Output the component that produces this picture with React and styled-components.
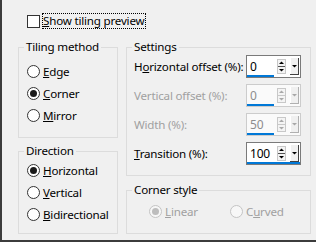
import React from "react";
import styled, { createGlobalStyle } from "styled-components";

const GlobalStyle = createGlobalStyle`
  html, body {
    margin: 0;
    padding: 0;
    background: #f0f0f0;
  }
  body {
    font-family: "Noto Sans", "Segoe UI", sans-serif;
    font-size: 11.6px;
    letter-spacing: -0.2px;
    color: #000;
  }
`;

const Dialog = styled.div`
  width: 316px;
  height: 242px;
  box-sizing: border-box;
  background: #f0f0f0;
  border-left: 2px solid #3c3c3c;
  border-bottom: 2px solid #3c3c3c;
  padding: 13px 0 0 16px;
  display: flex;
  flex-direction: column;
`;

const CheckRow = styled.div`
  display: flex;
  align-items: center;
  height: 16px;
  margin-left: 9px;
`;

const CheckBox = styled.span`
  width: 13px;
  height: 13px;
  box-sizing: border-box;
  border: 1px solid #333;
  background: #fff;
`;

const FocusLabel = styled.span`
  margin-left: 2px;
  padding: 0 1px 0 0;
  border: 1px dotted #000;
  line-height: 14px;
  white-space: nowrap;
`;

const Body = styled.div`
  display: flex;
  gap: 8px;
  margin-top: 10px;
`;

const Column = styled.div`
  display: flex;
  flex-direction: column;
  width: ${(p) => p.$w}px;
  gap: ${(p) => p.$gap}px;
`;

const Group = styled.fieldset`
  margin: 0;
  min-width: 0;
  box-sizing: border-box;
  height: ${(p) => p.$h}px;
  border: 1px solid #dcdcdc;
  padding: 0;
`;

const Legend = styled.legend`
  margin-left: 5px;
  padding: 0 2px;
  line-height: 16px;
  color: #000;
`;

const Rows = styled.div`
  display: flex;
  flex-direction: ${(p) => (p.$row ? "row" : "column")};
  gap: ${(p) => p.$gap || 0}px;
  padding: ${(p) => p.$pad};
`;

const RadioRow = styled.div`
  display: flex;
  align-items: center;
  height: 22px;
  width: ${(p) => (p.$w ? `${p.$w}px` : "auto")};
  color: ${(p) => (p.$disabled ? "#a0a0a0" : "#000")};
  white-space: nowrap;
`;

const RadioCircle = styled.span`
  position: relative;
  width: 13px;
  height: 13px;
  flex: none;
  box-sizing: border-box;
  border-radius: 50%;
  border: 1px solid ${(p) => (p.$disabled ? "#c4c4c4" : "#333")};
  background: ${(p) => (p.$disabled ? "#f7f7f7" : "#fff")};
  margin-right: 3px;

  &::after {
    content: "";
    display: ${(p) => (p.$checked ? "block" : "none")};
    position: absolute;
    left: 2px;
    top: 2px;
    width: 7px;
    height: 7px;
    border-radius: 50%;
    background: ${(p) => (p.$disabled ? "#bdbdbd" : "#1a1a1a")};
  }
`;

const SpinRow = styled.div`
  display: flex;
  align-items: center;
  justify-content: space-between;
  height: 23px;
  color: ${(p) => (p.$disabled ? "#a0a0a0" : "#000")};
  white-space: nowrap;
`;

const Spinner = styled.div`
  width: 55px;
  height: 23px;
  box-sizing: border-box;
  border: 1px solid ${(p) => (p.$disabled ? "#cccccc" : "#7a7a7a")};
  background: ${(p) => (p.$disabled ? "#fafafa" : "#fff")};
  display: flex;
  flex-direction: column;
`;

const SpinInner = styled.div`
  display: flex;
  align-items: center;
  height: 19px;
`;

const Value = styled.span`
  width: 27px;
  box-sizing: border-box;
  padding-left: 3px;
  padding-top: 2px;
  font-size: 12px;
  color: ${(p) => (p.$disabled ? "#8d8d8d" : "#000")};
`;

const Underline = styled.div`
  height: 2px;
  width: ${(p) => (p.$full ? "100%" : "27px")};
  background: #0078d7;
`;

const Icons = styled.div`
  display: flex;
  align-items: center;
  gap: 4px;
  margin-left: 3px;
  padding-top: 2px;
`;

const SpinArrows = ({ disabled }) => {
  const c = disabled ? "#a8a8a8" : "#000";
  return (
    <svg width="9" height="15" viewBox="0 0 9 15">
      <rect x="0.5" y="0.5" width="8" height="14" fill="#f4f4f4" stroke="#c8c8c8" />
      <path d="M2 5 L4.5 2.5 L7 5 Z" fill={c} />
      <line x1="1" y1="7.5" x2="8" y2="7.5" stroke={disabled ? "#c8c8c8" : "#555"} />
      <path d="M2 10 L4.5 12.5 L7 10 Z" fill={c} />
    </svg>
  );
};

const DropArrow = ({ disabled }) => {
  const edge = disabled ? "#b0b0b0" : "#404040";
  const c = disabled ? "#a8a8a8" : "#000";
  return (
    <svg width="9" height="17" viewBox="0 0 9 17">
      <rect x="0" y="0" width="9" height="17" fill="#f0f0f0" />
      <line x1="0.5" y1="0" x2="0.5" y2="16" stroke="#fff" />
      <line x1="8.5" y1="0" x2="8.5" y2="17" stroke={edge} />
      <line x1="0" y1="16.5" x2="9" y2="16.5" stroke={edge} />
      <path d="M2 7 L4.5 9.5 L7 7 Z" fill={c} />
    </svg>
  );
};

const Mnemonic = ({ label, u }) => {
  const i = u ? label.indexOf(u) : -1;
  if (i < 0) return <span>{label}</span>;
  return (
    <span>
      {label.slice(0, i)}
      <u>{u}</u>
      {label.slice(i + 1)}
    </span>
  );
};

const Radio = ({ label, u, checked, disabled, w }) => (
  <RadioRow $disabled={disabled} $w={w}>
    <RadioCircle $checked={checked} $disabled={disabled} />
    <Mnemonic label={label} u={u} />
  </RadioRow>
);

const Setting = ({ label, u, value, disabled, full }) => (
  <SpinRow $disabled={disabled}>
    <Mnemonic label={label} u={u} />
    <Spinner $disabled={disabled}>
      <SpinInner>
        <Value $disabled={disabled}>{value}</Value>
        <Icons>
          <SpinArrows disabled={disabled} />
          <DropArrow disabled={disabled} />
        </Icons>
      </SpinInner>
      <Underline $full={full} />
    </Spinner>
  </SpinRow>
);

export default function App() {
  return (
    <>
      <GlobalStyle />
      <Dialog>
        <CheckRow>
          <CheckBox />
          <FocusLabel>
            <u>S</u>how tiling preview
          </FocusLabel>
        </CheckRow>
        <Body>
          <Column $w={100} $gap={5}>
            <Group $h={99}>
              <Legend>Tiling method</Legend>
              <Rows $pad="5px 0 0 8px">
                <Radio label="Edge" u="E" />
                <Radio label="Corner" u="C" checked />
                <Radio label="Mirror" u="M" />
              </Rows>
            </Group>
            <Group $h={91}>
              <Legend>Direction</Legend>
              <Rows $pad="0 0 0 8px">
                <Radio label="Horizontal" u="H" checked />
                <Radio label="Vertical" u="V" />
                <Radio label="Bidirectional" u="B" />
              </Rows>
            </Group>
          </Column>
          <Column $w={185} $gap={6}>
            <Group $h={137}>
              <Legend>Settings</Legend>
              <Rows $gap={6} $pad="0 9px 0 7px">
                <Setting label="Horizontal offset (%):" u="o" value="0" />
                <Setting label="Vertical offset (%):" value="0" disabled />
                <Setting label="Width (%):" value="50" disabled />
                <Setting label="Transition (%):" u="T" value="100" full />
              </Rows>
            </Group>
            <Group $h={52}>
              <Legend>Corner style</Legend>
              <Rows $row $pad="2px 0 0 22px">
                <Radio label="Linear" u="L" checked disabled w={81} />
                <Radio label="Curved" u="u" disabled />
              </Rows>
            </Group>
          </Column>
        </Body>
      </Dialog>
    </>
  );
}
